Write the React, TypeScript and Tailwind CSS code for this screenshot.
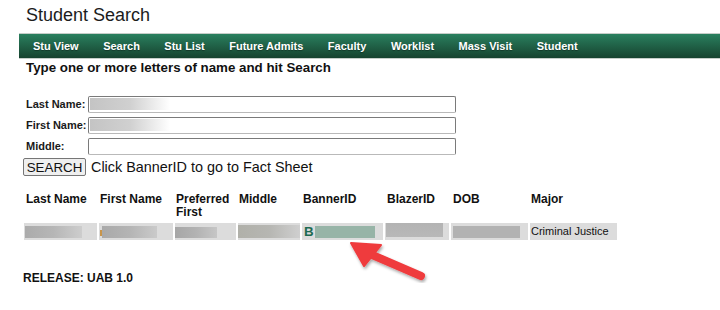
import React from "react";

const navItems = ["Stu View", "Search", "Stu List", "Future Admits", "Faculty", "Worklist", "Mass Visit", "Student"];

function FormRow({ label, blur }: { label: string; blur?: boolean }) {
  return (
    <div className="flex items-center h-[17px]">
      <div className="w-[62px] pl-[26px] box-content text-[11px] font-bold leading-[13px] whitespace-nowrap">{label}</div>
      <div className="relative w-[368px] h-[17px] border border-[#7a7a7a] border-b-[#b9b9b9] rounded-[2px] bg-white overflow-hidden">
        {blur && (
          <div className="absolute left-[1px] top-[1px] bottom-[2px] w-[80px] bg-gradient-to-r from-[#c4c4c4] via-[#d0d0d0] to-[#ffffff]" />
        )}
      </div>
    </div>
  );
}

export default function App() {
  return (
    <div className="relative w-[720px] h-[310px] bg-white text-[#1a1a1a] overflow-hidden" style={{ fontFamily: '"Liberation Sans", Arial, sans-serif' }}>
      <div className="pl-[26px] pt-[5px] text-[18px] leading-[21px] text-[#1c1c1c]">Student Search</div>

      <div className="mt-[7px] ml-[19px] h-[26px] border-y border-[#c6cec9] bg-gradient-to-b from-[#2a805f] to-[#16432f] flex items-center pl-[14px] gap-[24.5px]">
        {navItems.map((n) => (
          <span key={n} className="text-white text-[11px] font-bold leading-[13px] whitespace-nowrap [text-shadow:0_1px_1px_rgba(0,0,0,0.35)]">
            {n}
          </span>
        ))}
      </div>

      <div className="pl-[26px] pt-[1px] text-[13.33px] font-bold leading-[16px] text-[#111]">Type one or more letters of name and hit Search</div>

      <div className="mt-[20px] flex flex-col gap-[4px]">
        <FormRow label="Last Name:" blur />
        <FormRow label="First Name:" blur />
        <FormRow label="Middle:" />
      </div>

      <div className="mt-[3px] flex items-center pl-[23px]">
        <div className="w-[63px] h-[18px] border border-[#767676] rounded-[2px] bg-[#efefef] flex items-center justify-center text-[13.33px] leading-[15px] text-[#111]">
          SEARCH
        </div>
        <span className="ml-[5px] text-[14.4px] leading-[17px] text-[#111]">Click BannerID to go to Fact Sheet</span>
      </div>

      <div className="mt-[17px] pl-[24px]">
        <div className="flex gap-[2px] text-[12px] font-bold leading-[13px] text-[#111]">
          <div className="w-[73px] pl-[2px]">Last Name</div>
          <div className="w-[74px] pl-[1px]">First Name</div>
          <div className="w-[61px] pl-[1px]">Preferred<br />First</div>
          <div className="w-[62px] pl-[1px]">Middle</div>
          <div className="w-[81px] pl-[1px]">BannerID</div>
          <div className="w-[64px] pl-[2px]">BlazerID</div>
          <div className="w-[77px] pl-[2px]">DOB</div>
          <div className="w-[87px] pl-[1px]">Major</div>
        </div>
        <div className="mt-[4px] flex gap-[2px] h-[17px]">
          <div className="w-[73px] bg-[#dcdcdc] flex items-center pl-[1px]">
            <div className="w-[57px] h-[12px] bg-gradient-to-r from-[#ababab] via-[#b6b6b6] to-[#cdcdcd]" />
          </div>
          <div className="w-[74px] bg-[#dcdcdc] flex items-center pl-[1px]">
            <div className="w-[2px] h-[6px] bg-[#c9954a] mt-[2px]" />
            <div className="w-[55px] h-[12px] bg-gradient-to-r from-[#a9a9a9] via-[#b4b4b4] to-[#cacaca]" />
          </div>
          <div className="w-[61px] bg-[#dcdcdc] flex items-center">
            <div className="w-[42px] h-[11px] mt-[1px] bg-gradient-to-r from-[#a6a6a6] via-[#b2b2b2] to-[#c6c6c6]" />
          </div>
          <div className="w-[62px] bg-[#dcdcdc] flex items-center">
            <div className="w-[62px] h-[13px] bg-gradient-to-r from-[#b0b0a9] via-[#b6b6b2] to-[#cfcfcf]" />
          </div>
          <div className="w-[81px] bg-[#dcdcdc] flex items-center pl-[2px]">
            <span className="text-[13.33px] font-bold leading-[14px] text-[#1d6b52]">B</span>
            <div className="ml-[1px] w-[60px] h-[12px] bg-[#97b4a7]" />
          </div>
          <div className="w-[64px] bg-[#dcdcdc] flex items-start pl-[1px]">
            <div className="w-[57px] h-[14px] bg-gradient-to-b from-[#b3b3b3] to-[#b8b8b8]" />
          </div>
          <div className="w-[77px] bg-[#dcdcdc] flex items-center pl-[2px]">
            <div className="w-[67px] h-[12px] bg-[#b2b2b2]" />
          </div>
          <div className="w-[87px] bg-[#dcdcdc] flex items-center pl-[1px] text-[11px] leading-[13px] text-[#111] whitespace-nowrap">
            Criminal Justice
          </div>
        </div>
      </div>

      <div className="mt-[31px] pl-[23px] text-[12px] font-bold leading-[14px] text-[#111]">RELEASE: UAB 1.0</div>

      <svg className="absolute left-0 top-0 pointer-events-none" width="720" height="310" viewBox="0 0 720 310">
        <defs>
          <filter id="sh" x="-20%" y="-20%" width="140%" height="140%">
            <feDropShadow dx="1" dy="2" stdDeviation="1.5" floodColor="#000" floodOpacity="0.35" />
          </filter>
        </defs>
        <g filter="url(#sh)" fill="#ef3b3e" stroke="#ef3b3e">
          <line x1="370" y1="254" x2="421" y2="276" strokeWidth="8" strokeLinecap="round" />
          <polygon points="351,243 381,245 364,266" strokeWidth="2" strokeLinejoin="round" />
        </g>
      </svg>
    </div>
  );
}
